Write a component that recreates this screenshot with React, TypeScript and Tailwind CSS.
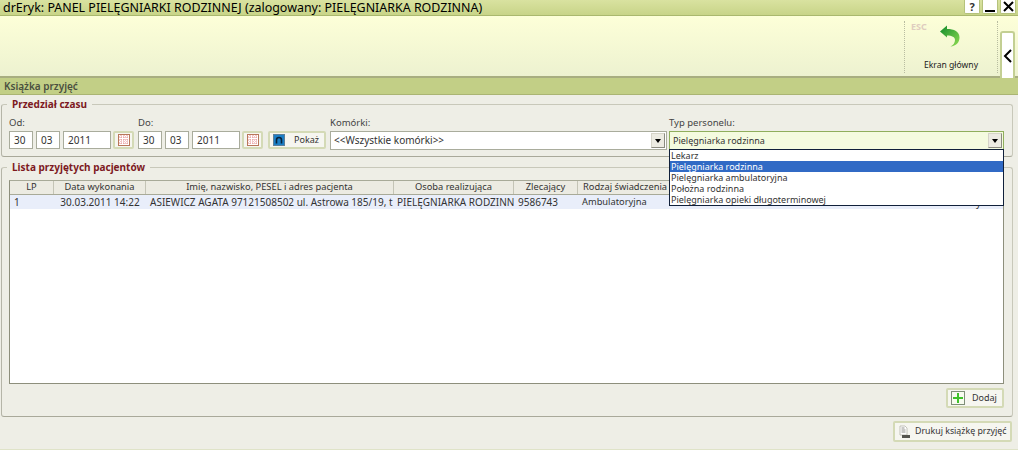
const columns = [
  { label: "LP", width: "w-[44px]" },
  { label: "Data wykonania", width: "w-[92px]" },
  { label: "Imię, nazwisko, PESEL i adres pacjenta", width: "w-[248px]" },
  { label: "Osoba realizująca", width: "w-[120px]" },
  { label: "Zlecający", width: "w-[64px]" },
  { label: "Rodzaj świadczenia", width: "w-[95px]" },
];

const personel = [
  "Lekarz",
  "Pielęgniarka rodzinna",
  "Pielęgniarka ambulatoryjna",
  "Położna rodzinna",
  "Pielęgniarka opieki długoterminowej",
];

function Field({ value, width }: { value: string; width: string }) {
  return (
    <div className={`${width} h-[18px] bg-white border border-[#a9ac9c] flex items-center px-[4px] shrink-0`}>
      {value}
    </div>
  );
}

function CalendarButton() {
  return (
    <button className="w-[21px] h-[18px] ml-[-1px] bg-[#f6f6f0] border-2 border-[#d4dab6] rounded-[2px] flex items-center justify-center shrink-0">
      <svg width="12" height="12" viewBox="0 0 12 12">
        <rect x="0.5" y="0.5" width="11" height="11" fill="#fff" stroke="#b8775a" />
        <path d="M3 1v10M6 1v10M9 1v10M1 3h10M1 6h10M1 9h10" stroke="#e58e8e" strokeWidth="1" strokeDasharray="1 1" />
      </svg>
    </button>
  );
}

function DateGroup({ label }: { label: string }) {
  return (
    <div className="flex flex-col w-[125px] shrink-0">
      <span className="h-[14px] leading-[11px] text-[9.500px] text-[#444]">{label}</span>
      <div className="flex items-center gap-[3px]">
        <Field value="30" width="w-[24px]" />
        <Field value="03" width="w-[24px]" />
        <Field value="2011" width="w-[48px]" />
        <CalendarButton />
      </div>
    </div>
  );
}

function Combo({ value, light }: { value: string; light?: boolean }) {
  return (
    <div
      className={`h-[19px] border flex items-center justify-between pl-[2px] pr-[1px] ${
        light ? "bg-[#f4fbdf] border-[#8fae5c] text-[9px]" : "bg-white border-[#a9ac9c]"
      }`}
    >
      <span className="pl-[1px]">{value}</span>
      <span className="w-[14px] h-[15px] bg-[#ecebe2] border border-[#d5d4c8] border-r-[#8b8b80] border-b-[#8b8b80] flex items-center justify-center">
        <span className="w-0 h-0 border-x-[3px] border-x-transparent border-t-[4px] border-t-black" />
      </span>
    </div>
  );
}

function Section({ title, className, children }: { title: string; className: string; children: React.ReactNode }) {
  return (
    <fieldset className={`border border-[#c8c8ba] border-b-[#a9a99a] border-l-[#b5b5a8] rounded-[3px] min-w-0 ${className}`}>
      <legend className="ml-[-2px] px-[5px] text-[10px] font-bold text-[#7d1a1f] leading-[13px]">{title}</legend>
      {children}
    </fieldset>
  );
}

export default function App() {
  return (
    <div className="w-[1018px] h-[450px] overflow-hidden flex flex-col bg-[#eeeee6] text-[10px] text-[#333] font-['Noto_Sans',sans-serif]">
      {/* belka tytulu */}
      <div className="h-[16px] shrink-0 flex items-start justify-between pl-[3px] pr-[2px] bg-gradient-to-b from-[#d9e2a0] to-[#c8d488] border-b border-[#aab86e]">
        <span className="text-[12.450px] leading-[15px] text-black whitespace-nowrap">
          drEryk: PANEL PIELĘGNIARKI RODZINNEJ (zalogowany: PIELĘGNIARKA RODZINNA)
        </span>
        <div className="flex gap-[2px]">
          <span className="w-[16px] h-[14px] bg-white border border-t-0 border-[#b5c27c] rounded-b-[2px] flex items-center justify-center text-[11px] leading-[13px] font-bold">?</span>
          <span className="w-[16px] h-[14px] bg-white border border-t-0 border-[#b5c27c] rounded-b-[2px] flex items-end justify-center pb-[1px]">
            <span className="w-[10px] h-[2px] bg-black" />
          </span>
          <span className="w-[16px] h-[14px] bg-white border border-t-0 border-[#b5c27c] rounded-b-[2px] flex items-center justify-center">
            <svg width="11" height="11" viewBox="0 0 11 11">
              <path d="M1 1l9 9M10 1l-9 9" stroke="#000" strokeWidth="2" />
            </svg>
          </span>
        </div>
      </div>

      {/* pasek narzedzi */}
      <div className="h-[62px] shrink-0 flex justify-end items-end pr-[3px] bg-gradient-to-b from-[#fdffd8] to-[#edf2d0] border-b-2 border-[#a8ae80]">
        <div className="relative w-[94px] h-[52px] mb-[3px] border-x border-dotted border-[#b8bca0] flex flex-col items-center">
          <span className="absolute left-[6px] top-[0px] text-[9px] leading-[11px] font-bold text-[#dfcdbf]">ESC</span>
          <svg width="20" height="22" viewBox="0 0 20 22" className="mt-[4px] ml-[-3px]">
            <defs>
              <linearGradient id="back" x1="0" y1="0" x2="1" y2="1">
                <stop offset="0" stopColor="#0f8a2c" />
                <stop offset="1" stopColor="#8fdc50" />
              </linearGradient>
            </defs>
            <path d="M0 6.500L7 0.500V4c7 0 12.500 2.500 12.500 8.500 0 5-3.500 8.500-9 9 3-1.500 4.500-4 4.500-6.500 0-3-3-4.500-8-4.500V12.500z" fill="url(#back)" />
          </svg>
          <span className="mt-[12px] text-[8.600px] leading-[12px] text-[#222]">Ekran główny</span>
        </div>
        <div className="w-[15px] h-[47px] ml-[2px] -mb-[2px] bg-white border-2 border-b-0 border-[#c3cf93] rounded-t-[3px] flex items-center justify-center">
          <svg width="10" height="14" viewBox="0 0 10 14">
            <path d="M8 1L2 7l6 6" fill="none" stroke="#000" strokeWidth="2" />
          </svg>
        </div>
      </div>

      {/* naglowek sekcji */}
      <div className="h-[17px] shrink-0 flex items-center pl-[4px] bg-[#c2cf86] border-b border-[#aab573] font-semibold text-[10px] text-[#4a5040]">
        Książka przyjęć
      </div>

      <div className="flex-1 flex flex-col pl-[1px] pr-[5px] pt-[3px] border-b border-[#dfe3c8]">
        <Section title="Przedział czasu" className="h-[59px] px-[7px] pt-[6px]">
          <div className="flex items-start">
            <DateGroup label="Od:" />
            <div className="ml-[4px]">
              <DateGroup label="Do:" />
            </div>
            <button className="mt-[14px] ml-[5px] w-[58px] h-[18px] bg-[#f6f6f0] border-2 border-[#d4dab6] rounded-[2px] flex items-center shrink-0 pl-[3px] gap-[9px] text-[9px]">
              <svg width="12" height="12" viewBox="0 0 12 12">
                <rect x="0.5" y="0.5" width="11" height="11" fill="#1b7fc6" stroke="#5c7f98" />
                <path d="M3.500 9.500V6a2.500 2.500 0 0 1 5 0v3.500" fill="none" stroke="#06243c" strokeWidth="1.600" />
              </svg>
              Pokaż
            </button>
            <div className="flex flex-col w-[337px] ml-[4px] shrink-0">
              <span className="h-[14px] leading-[11px] text-[9.500px] text-[#444]">Komórki:</span>
              <Combo value="<<Wszystkie komórki>>" />
            </div>
            <div className="relative flex flex-col w-[335px] ml-[2px] shrink-0">
              <span className="h-[14px] leading-[11px] text-[9.500px] text-[#444]">Typ personelu:</span>
              <Combo value="Pielęgniarka rodzinna" light />
              <ul className="absolute z-10 left-0 right-0 top-[32px] h-[57px] bg-white border border-[#10203a] text-[9px] leading-[11px]">
                {personel.map((item) => (
                  <li
                    key={item}
                    className={`h-[11px] pl-[1px] whitespace-nowrap ${item === "Pielęgniarka rodzinna" ? "bg-[#316ac5] text-white" : ""}`}
                  >
                    {item}
                  </li>
                ))}
              </ul>
            </div>
          </div>
        </Section>

        <Section title="Lista przyjętych pacjentów" className="mt-[4px] h-[256px] px-[7px] pt-[6px]">
          <div className="w-[995px] h-[204px] bg-white border border-[#8d8f7c] border-t-[#a8aa98] flex flex-col">
            <div className="h-[14px] flex bg-[#ecebe2] border-b border-[#a8aa98] shrink-0 text-[9.300px]">
              {columns.map((col) => (
                <div key={col.label} className={`${col.width} text-center border-r border-[#c4c4b6] leading-[12px] whitespace-nowrap overflow-hidden shrink-0`}>
                  {col.label}
                </div>
              ))}
            </div>
            <div className="h-[14px] flex items-center bg-[#e9eefa] leading-[14px] whitespace-nowrap shrink-0">
              <div className="w-[44px] pl-[4px] shrink-0">1</div>
              <div className="w-[92px] text-center shrink-0">30.03.2011 14:22</div>
              <div className="w-[248px] pl-[4px] overflow-hidden shrink-0">ASIEWICZ AGATA 97121508502 ul. Astrowa 185/19, t</div>
              <div className="w-[120px] pl-[3px] overflow-hidden shrink-0">PIELĘGNIARKA RODZINNA</div>
              <div className="w-[64px] pl-[4px] shrink-0">9586743</div>
              <div className="w-[95px] pl-[4px] shrink-0 text-[9.300px]">Ambulatoryjna</div>
              <div className="flex-1 text-right pr-[22px]">y</div>
            </div>
          </div>
          <div className="flex justify-end pr-[1px] mt-[4px]">
            <button className="w-[58px] h-[20px] bg-[#f6f6f0] border-2 border-[#d4dab6] rounded-[2px] flex items-center pl-[3px] gap-[7px] text-[9px]">
              <svg width="14" height="14" viewBox="0 0 14 14">
                <rect x="0.5" y="0.5" width="13" height="13" fill="#f7fbef" stroke="#7f8f78" />
                <path d="M7 2v10M2 7h10" stroke="#3fc22a" strokeWidth="2" />
              </svg>
              Dodaj
            </button>
          </div>
        </Section>

        <div className="flex justify-end pr-[1px] mt-[4px]">
          <button className="w-[119px] h-[21px] bg-[#f6f6f0] border-2 border-[#d4dab6] rounded-[2px] flex items-center pl-[4px] gap-[4px] whitespace-nowrap text-[8.800px]">
            <svg width="12" height="14" viewBox="0 0 12 14">
              <path d="M1 1h5l2 2v7H1z" fill="#fff" stroke="#b5b5aa" strokeWidth="0.8" />
              <path d="M2.500 3h3M2.500 5h4M2.500 7h4" stroke="#77776f" strokeWidth="0.8" />
              <path d="M3 10h8v3H3z" fill="#55554f" />
            </svg>
            Drukuj książkę przyjęć
          </button>
        </div>
      </div>
    </div>
  );
}
